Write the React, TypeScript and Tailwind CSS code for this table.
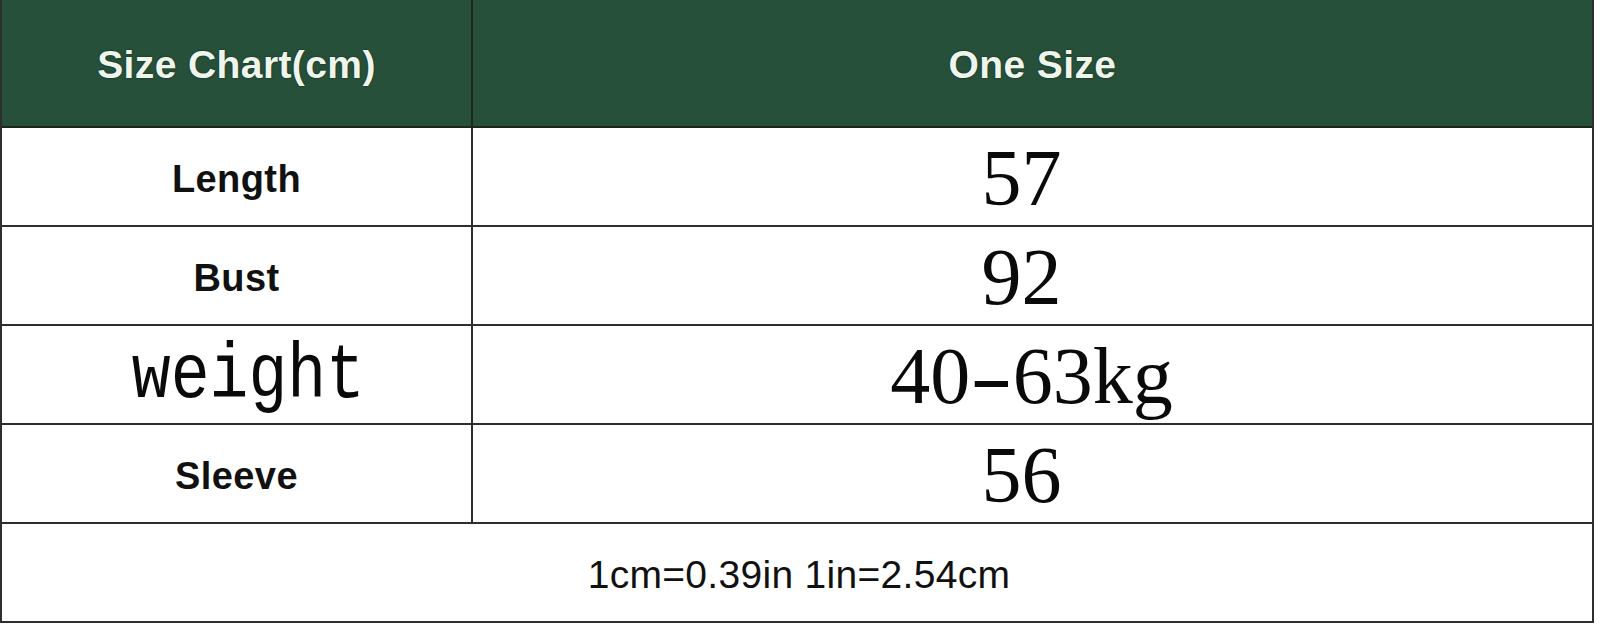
import React from "react";

const sans = { fontFamily: '"Liberation Sans", Arial, sans-serif' };
const serif = { fontFamily: '"Liberation Serif", "Times New Roman", serif' };
const mono = { fontFamily: '"Liberation Mono", "Courier New", monospace' };

function Label({ children }: { children: React.ReactNode }) {
  return (
    <span className="text-[38px] font-bold text-[#111] leading-none tracking-[0.4px] pt-[5px]" style={sans}>
      {children}
    </span>
  );
}

function Value({ children }: { children: React.ReactNode }) {
  return (
    <span className="text-[80px] text-[#0a0a0a] leading-none -ml-[22px] pt-[3px]" style={serif}>
      {children}
    </span>
  );
}

function Row({ left, right }: { left: React.ReactNode; right: React.ReactNode }) {
  return (
    <div className="flex h-[99px] border-b-2 border-[#2e2e2e]">
      <div className="w-[471px] shrink-0 border-r-2 border-[#2e2e2e] flex items-center justify-center">{left}</div>
      <div className="flex-1 flex items-center justify-center">{right}</div>
    </div>
  );
}

export default function App() {
  return (
    <div className="w-[1600px] h-[625px] bg-white">
      <div className="w-[1594px] border-l-2 border-r-2 border-b-2 border-[#2e2e2e] flex flex-col">
        <div className="flex h-[128px] bg-[#265039] border-b-2 border-[#1a2820]">
          <div className="w-[471px] shrink-0 border-r-2 border-[#1a2820] flex items-center justify-center pt-[2px]">
            <span
              className="text-[39px] font-bold text-[#eef5ec] leading-none tracking-[0.4px]"
              style={{ ...sans, textShadow: "0 0 2px rgba(0,0,0,0.6)" }}
            >
              Size Chart(cm)
            </span>
          </div>
          <div className="flex-1 flex items-center justify-center pt-[2px]">
            <span
              className="text-[39px] font-bold text-[#eef5ec] leading-none tracking-[0.4px]"
              style={{ ...sans, textShadow: "0 0 2px rgba(0,0,0,0.6)" }}
            >
              One Size
            </span>
          </div>
        </div>
        <Row left={<Label>Length</Label>} right={<Value>57</Value>} />
        <Row left={<Label>Bust</Label>} right={<Value>92</Value>} />
        <Row
          left={
            <span
              className="inline-block text-[78px] text-[#0a0a0a] leading-none scale-x-[0.83] ml-[24px] pt-[2px]"
              style={mono}
            >
              weight
            </span>
          }
          right={
            <span className="text-[80px] text-[#0a0a0a] leading-none -ml-[2px] pt-[2px]" style={serif}>
              40
              <span className="inline-block scale-x-[1.6] mx-[8px]">-</span>
              63kg
            </span>
          }
        />
        <Row left={<Label>Sleeve</Label>} right={<Value>56</Value>} />
        <div className="h-[97px] flex items-center justify-center pt-[3px]">
          <span className="text-[39px] text-[#111] leading-none tracking-[0.3px] ml-[4px]" style={sans}>
            1cm=0.39in 1in=2.54cm
          </span>
        </div>
      </div>
    </div>
  );
}
